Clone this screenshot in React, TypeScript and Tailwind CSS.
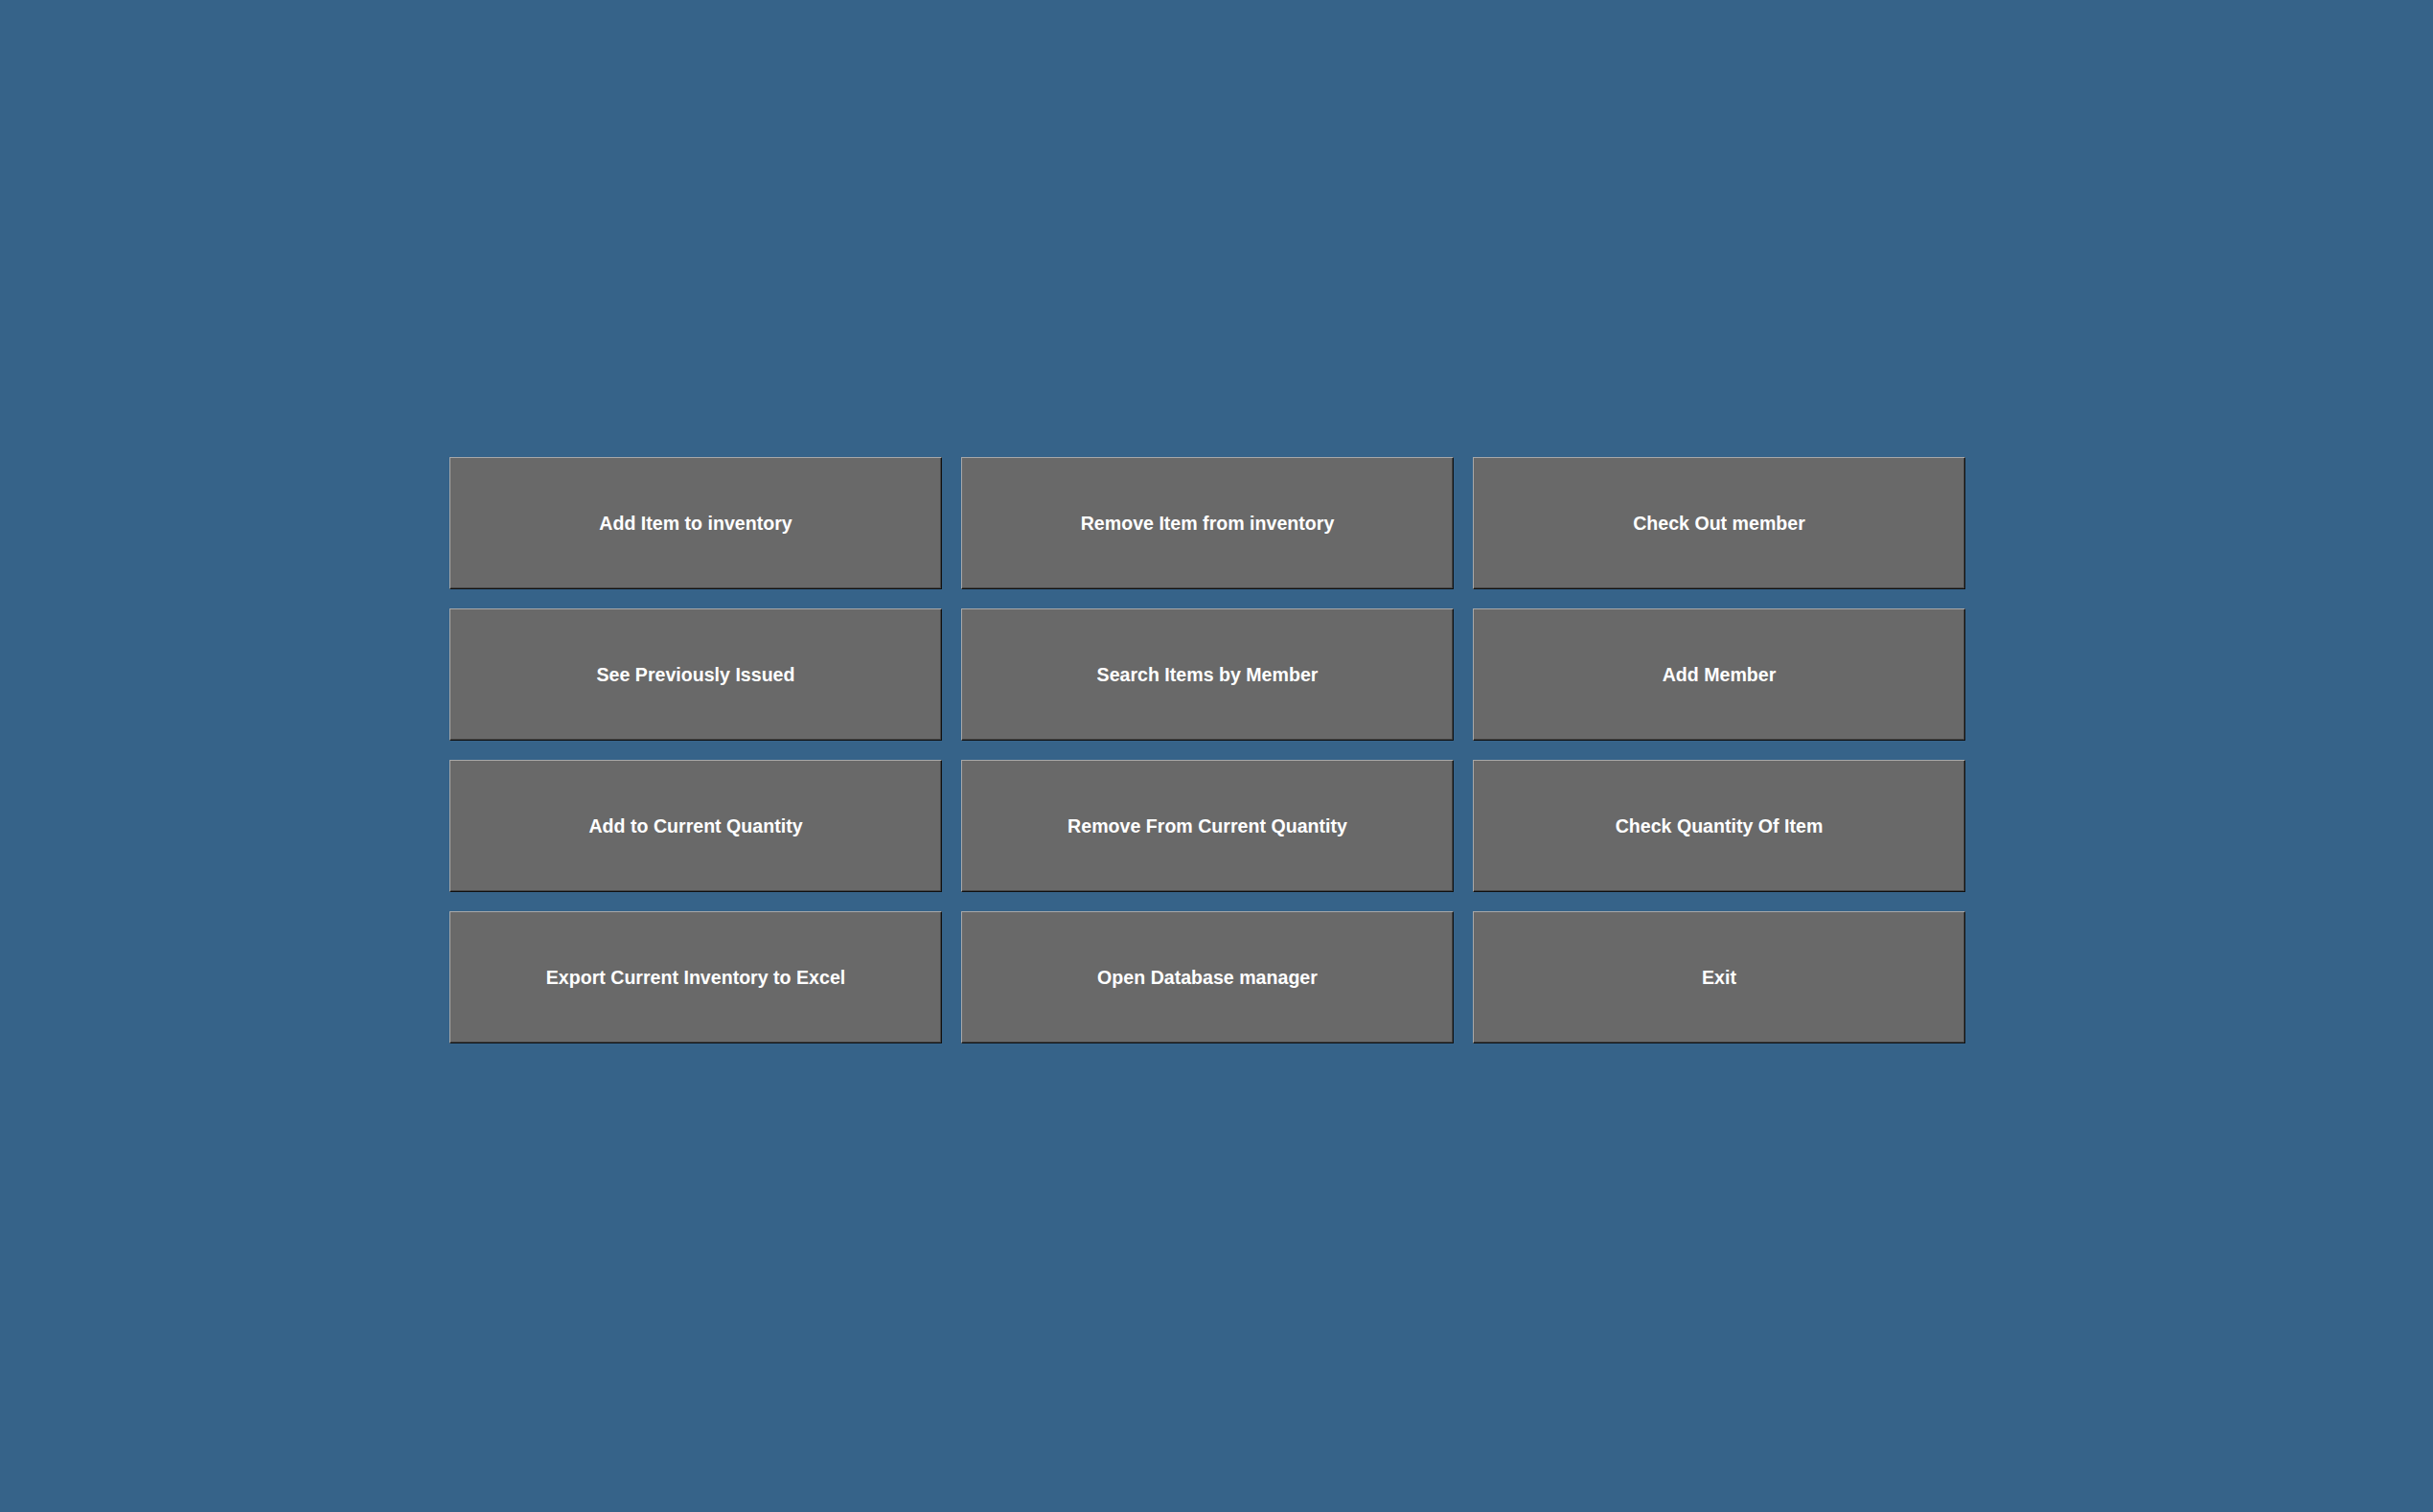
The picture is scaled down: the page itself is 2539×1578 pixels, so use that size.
import React from "react";

const labels = [
  "Add Item to inventory",
  "Remove Item from inventory",
  "Check Out member",
  "See Previously Issued",
  "Search Items by Member",
  "Add Member",
  "Add to Current Quantity",
  "Remove From Current Quantity",
  "Check Quantity Of Item",
  "Export Current Inventory to Excel",
  "Open Database manager",
  "Exit",
];

export default function App() {
  return (
    <div
      className="w-[2539px] h-[1578px] bg-[#366389] pl-[469px] pt-[477px]"
      style={{ fontFamily: '"Liberation Sans", Arial, sans-serif' }}
    >
      <div className="grid grid-cols-[514px_514px_514px] auto-rows-[138px] gap-[20px]">
        {labels.map((l) => (
          <button
            key={l}
            className="flex items-center justify-center pt-[2px] bg-[#696969] border border-t-[#a8a8a8] border-l-[#a8a8a8] border-r-[#101010] border-b-[#101010] shadow-[inset_-1px_-1px_0_#474747] text-white font-bold text-[19.6px] leading-none"
          >
            {l}
          </button>
        ))}
      </div>
    </div>
  );
}
